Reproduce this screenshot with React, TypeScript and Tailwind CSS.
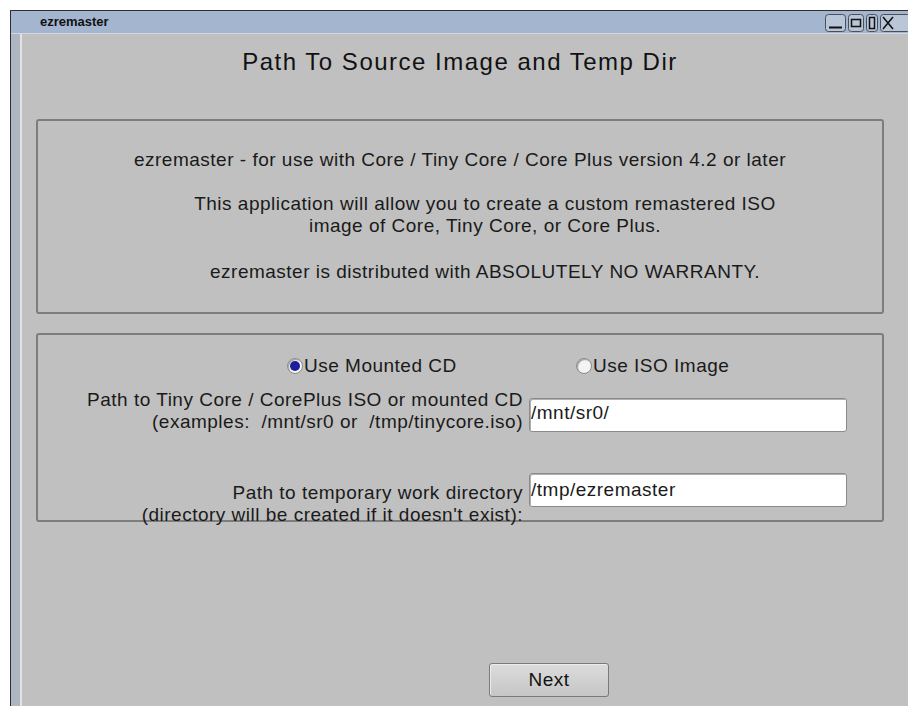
// ezremaster wizard: first page (source image + temp dir)
function TitleButtons() {
  return (
    <div className="flex items-center gap-[2px] pt-[1px]">
      <svg width="21" height="18" viewBox="0 0 21 18">
        <rect x="0.5" y="0.5" width="20" height="17" rx="3" fill="#b9c6d8" stroke="#4a4f57" />
        <line x1="4" y1="13.5" x2="17" y2="13.5" stroke="#111" strokeWidth="2" />
      </svg>
      <svg width="16" height="18" viewBox="0 0 16 18">
        <rect x="0.5" y="0.5" width="15" height="17" rx="3" fill="#b9c6d8" stroke="#4a4f57" />
        <rect x="3.5" y="5.5" width="9" height="7" fill="none" stroke="#111" strokeWidth="1.5" />
      </svg>
      <svg width="12" height="18" viewBox="0 0 12 18">
        <rect x="0.5" y="0.5" width="11" height="17" rx="3" fill="#b9c6d8" stroke="#4a4f57" />
        <rect x="3.5" y="3.5" width="5" height="11" fill="none" stroke="#111" strokeWidth="1.5" />
      </svg>
      <svg width="28" height="18" viewBox="0 0 28 18">
        <rect x="0.5" y="0.5" width="30" height="17" rx="3" fill="#b9c6d8" stroke="#4a4f57" />
        <path d="M3 3 L13 15 M13 3 L3 15" stroke="#111" strokeWidth="1.6" />
      </svg>
    </div>
  )
}

function Radio({ checked, label }: { checked?: boolean; label: string }) {
  return (
    <div className="flex items-center">
      <span className="flex h-[16px] w-[16px] items-center justify-center rounded-full border border-[#8a8a8a] bg-[#f4f4f4] shadow-[inset_1px_1px_1px_#9a9a9a]">
        {checked && <span className="h-[10px] w-[10px] rounded-full bg-[#1c1f9c]" />}
      </span>
      <span className="ml-[1px]">{label}</span>
    </div>
  )
}

export default function App() {
  return (
    <div className="h-[706px] w-[908px] overflow-hidden bg-white pl-[10px] pt-[10px] font-['Liberation_Sans',Arial,sans-serif] text-[#1a1a1a]">
      <div className="flex h-full flex-col border-l border-t border-[#2e2e2e]">
        {/* title bar */}
        <div className="flex h-[23px] items-center justify-between border-b border-[#d0d7e2] bg-[#a3b5cf] pl-[29px]">
          <span className="text-[13px] font-bold text-[#111]">ezremaster</span>
          <TitleButtons />
        </div>

        <div className="flex flex-1">
          {/* left frame */}
          <div className="w-[11px] border-r-2 border-[#e2e2e2] bg-[#aeb6c2]" />

          <div className="flex-1 bg-[#c0c0c0] pl-[14px] text-[19px] tracking-[0.5px]">
            <div className="w-[848px]">
              <h1 className="pt-[16px] text-center text-[24px] leading-6 tracking-[1.5px] text-[#111]">
                Path To Source Image and Temp Dir
              </h1>

              <div className="mt-[45px] h-[195px] rounded-[3px] border-2 border-[#7d7d7d] pt-[28px] leading-[22px]">
                <p className="text-center">
                  ezremaster - for use with Core / Tiny Core / Core Plus version 4.2 or later
                </p>
                <p className="mt-[22px] pl-[50px] text-center">
                  This application will allow you to create a custom remastered ISO
                  <br />
                  image of Core, Tiny Core, or Core Plus.
                </p>
                <p className="mt-[24px] pl-[50px] text-center">
                  ezremaster is distributed with ABSOLUTELY NO WARRANTY.
                </p>
              </div>

              <div className="mt-[19px] h-[189px] rounded-[3px] border-2 border-[#7d7d7d] pt-[21px]">
                <div className="ml-[249px] flex h-[20px] leading-5">
                  <div className="w-[289px]">
                    <Radio checked label="Use Mounted CD" />
                  </div>
                  <Radio label="Use ISO Image" />
                </div>

                <div className="mt-[13px] flex items-start">
                  <div className="w-[485px] text-right leading-[22px]">
                    Path to Tiny Core / CorePlus ISO or mounted CD
                    <br />
                    (examples:&nbsp; /mnt/sr0 or&nbsp; /tmp/tinycore.iso)
                  </div>
                  <div className="ml-[6px] mt-[9px] h-[34px] w-[318px] rounded-[3px] border border-[#8a8a8a] bg-white pl-[1px] pt-[4px] leading-5 shadow-[inset_1px_1px_0_#b0b0b0]">
                    /mnt/sr0/
                  </div>
                </div>

                <div className="mt-[40px] flex items-start">
                  <div className="mt-[9px] w-[485px] text-right leading-[22px]">
                    Path to temporary work directory
                    <br />
                    (directory will be created if it doesn't exist):
                  </div>
                  <div className="ml-[6px] flex h-[34px] w-[318px] items-center rounded-[3px] border border-[#8a8a8a] bg-white pl-[1px] shadow-[inset_1px_1px_0_#b0b0b0]">
                    /tmp/ezremaster
                  </div>
                </div>
              </div>

              <div className="mt-[141px] pl-[453px]">
                <button className="h-[34px] w-[120px] rounded-[3px] border border-[#7a7a7a] bg-gradient-to-b from-[#dcdcdc] to-[#c6c6c6] text-[19px] text-[#111] shadow-[inset_1px_1px_0_#ececec]">
                  Next
                </button>
              </div>
            </div>
          </div>
        </div>
      </div>
    </div>
  )
}
